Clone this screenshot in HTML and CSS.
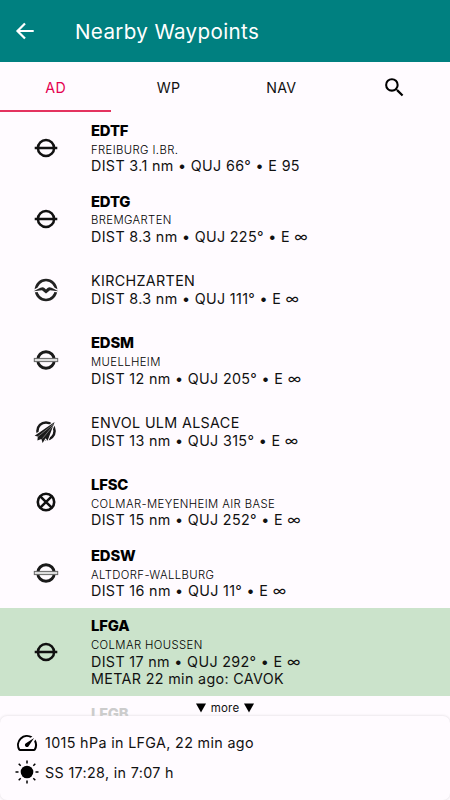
FILE: index.html
```
<!DOCTYPE html>
<html lang="en">
<head>
	<meta charset="utf-8">
	<meta name="viewport" content="width=device-width, initial-scale=1">
	<title>Nearby Waypoints</title>
	<link rel="stylesheet" href="styles.css">
</head>
<body>
	<svg class="defs" width="0" height="0">
		<symbol id="airport" viewBox="0 0 26 26">
			<circle cx="13" cy="13" r="8.1" fill="none" stroke="#111" stroke-width="2.5"/>
			<path d="M1.700 13h22.600" stroke="#111" stroke-width="2.5"/>
		</symbol>
		<symbol id="airfield" viewBox="0 0 26 26">
			<circle cx="13" cy="13" r="8.300" fill="none" stroke="#1a1a1a" stroke-width="2.9"/>
			<rect x="1.3" y="11.4" width="23.4" height="3.2" fill="#ddd" stroke="#666" stroke-width="1"/>
		</symbol>
		<symbol id="glider" viewBox="0 0 26 26">
			<circle cx="13" cy="13" r="10" fill="none" stroke="#222" stroke-width="2.7"/>
			<path d="M.5 14.200C4 12.800 7 10.400 9.500 10.200c1.500 0 2.500 1 3.500 2.300 1-1.300 2-2.300 3.500-2.300 2.500.2 5.500 2.600 9 4L17 13.300l-4 3.200-4-3.200z" fill="#222" stroke="#fffbff" stroke-width="2.6" paint-order="stroke"/>
		</symbol>
		<symbol id="ultralight" viewBox="0 0 26 26">
			<circle cx="13" cy="13" r="8.600" fill="none" stroke="#1a1a1a" stroke-width="2.500"/>
			<path d="M21.600 4L1.600 17.700l3.200.8-.4 4.100 4-1.600 1.200 4 3-4.700 2 2.500z" fill="#1a1a1a" stroke="#fffbff" stroke-width="2" paint-order="stroke"/>
			<path d="M20.500 6L5 18.500M20.600 7L9.500 20.500" stroke="#aaa" stroke-width=".6"/>
		</symbol>
		<symbol id="closed" viewBox="0 0 26 26">
			<circle cx="13" cy="13" r="8.200" fill="none" stroke="#111" stroke-width="2.600"/>
			<path d="M7.300 7.300l11.400 11.400M18.700 7.300L7.300 18.700" stroke="#111" stroke-width="2.500"/>
		</symbol>
	</svg>

	<div class="page">
		<header class="topbar">
			<svg class="back" viewBox="0 0 24 24"><path d="M21.500 12H4M12 3.800L3.800 12l8.200 8.200" fill="none" stroke="#fff" stroke-width="2.400"/></svg>
			<h1>Nearby Waypoints</h1>
		</header>
		<nav class="tabs">
			<div class="tab active">AD</div>
			<div class="tab">WP</div>
			<div class="tab">NAV</div>
			<div class="tab">
				<svg class="search" viewBox="0 0 24 24"><path d="M15.500 14h-.79l-.28-.27A6.471 6.471 0 0 0 16 9.500 6.500 6.500 0 1 0 9.500 16c1.610 0 3.090-.59 4.230-1.570l.27.28v.79l5 4.990L20.490 19l-4.990-5zm-6 0C7.010 14 5 11.990 5 9.500S7.010 5 9.500 5 14 7.010 14 9.500 11.990 14 9.500 14z"/></svg>
			</div>
		</nav>

		<main class="list">
			<div class="row">
				<svg class="icon"><use href="#airport"/></svg>
				<div class="info"><b>EDTF</b><small>FREIBURG I.BR.</small><p>DIST 3.1 nm • QUJ 66° • E 95</p></div>
			</div>
			<div class="row">
				<svg class="icon"><use href="#airport"/></svg>
				<div class="info"><b>EDTG</b><small>BREMGARTEN</small><p>DIST 8.3 nm • QUJ 225° • E ∞</p></div>
			</div>
			<div class="row">
				<svg class="icon"><use href="#glider"/></svg>
				<div class="info"><p>KIRCHZARTEN</p><p>DIST 8.3 nm • QUJ 111° • E ∞</p></div>
			</div>
			<div class="row">
				<svg class="icon"><use href="#airfield"/></svg>
				<div class="info"><b>EDSM</b><small>MUELLHEIM</small><p>DIST 12 nm • QUJ 205° • E ∞</p></div>
			</div>
			<div class="row">
				<svg class="icon"><use href="#ultralight"/></svg>
				<div class="info"><p>ENVOL ULM ALSACE</p><p>DIST 13 nm • QUJ 315° • E ∞</p></div>
			</div>
			<div class="row">
				<svg class="icon"><use href="#closed"/></svg>
				<div class="info"><b>LFSC</b><small>COLMAR-MEYENHEIM AIR BASE</small><p>DIST 15 nm • QUJ 252° • E ∞</p></div>
			</div>
			<div class="row">
				<svg class="icon"><use href="#airfield"/></svg>
				<div class="info"><b>EDSW</b><small>ALTDORF-WALLBURG</small><p>DIST 16 nm • QUJ 11° • E ∞</p></div>
			</div>
			<div class="row metar">
				<svg class="icon"><use href="#airport"/></svg>
				<div class="info"><b>LFGA</b><small>COLMAR HOUSSEN</small><p>DIST 17 nm • QUJ 292° • E ∞</p><p>METAR 22 min ago: CAVOK</p></div>
			</div>
			<div class="row next">
				<div class="info"><b>LFGB</b></div>
			</div>
			<div class="more">
				<svg viewBox="0 0 10 10"><path d="M0 .5h10L5 9.500z"/></svg>
				<span>more</span>
				<svg viewBox="0 0 10 10"><path d="M0 .5h10L5 9.500z"/></svg>
			</div>
		</main>

		<footer class="status">
			<div class="line">
				<svg viewBox="0 0 24 24"><path d="M20.380 8.570l-1.230 1.850a8 8 0 0 1-.22 7.580H5.070A8 8 0 0 1 15.580 6.850l1.850-1.230A10 10 0 0 0 3.350 19a2 2 0 0 0 1.720 1h13.850a2 2 0 0 0 1.740-1 10 10 0 0 0-.27-10.440zm-9.790 6.840a2 2 0 0 0 2.830 0l5.660-8.490-8.490 5.660a2 2 0 0 0 0 2.830z"/></svg>
				<span>1015 hPa in LFGA, 22 min ago</span>
			</div>
			<div class="line">
				<svg viewBox="0 0 24 24"><circle cx="12" cy="12" r="6.300"/><path d="M12 .5v3M12 20.500v3M.5 12h3M20.500 12h3M3.700 3.700l2 2M18.300 18.300l2 2M3.700 20.300l2-2M18.300 5.700l2-2" stroke="#000" stroke-width="1.500"/></svg>
				<span>SS 17:28, in 7:07 h</span>
			</div>
		</footer>
	</div>
</body>
</html>
```
FILE: styles.css
```
*{
	box-sizing: border-box;
}
body{
	margin: 0;
	background: #ddd;
	color: #111;
	font-family: Inter, "Liberation Sans", sans-serif;
	font-size: 14.3px;
	font-weight: 400;
	letter-spacing: 0.35px;
}
.defs{
	display: block;
}
.page{
	display: flex;
	flex-direction: column;
	height: 800px;
	overflow: hidden;
	background: #fffbff;
}
.topbar{
	display: flex;
	align-items: center;
	flex: none;
	height: 62.4px;
	padding-left: 14px;
	background: #008080;
	color: #fff;
}
.back{
	width: 22px;
	height: 22px;
}
.topbar h1{
	margin: 0 0 0 39px;
	font-size: 20.6px;
	font-weight: 400;
	letter-spacing: 0.35px;
}
.tabs{
	display: flex;
	flex: none;
	height: 50px;
	font-size: 14.2px;
}
.tab{
	display: flex;
	align-items: center;
	justify-content: center;
	width: 112.7px;
	padding: 2px 0 0 2px;
	border-bottom: 2px solid transparent;
}
.tab.active{
	width: 111.3px;
	padding-left: 0;
	color: #e4004f;
	border-bottom-color: #e4325f;
}
.search{
	width: 25px;
	height: 25px;
}
.list{
	position: relative;
	flex: 1;
	overflow: hidden;
}
.row{
	display: flex;
	align-items: center;
	height: 70.86px;
	padding-left: 33px;
}
.icon{
	flex: none;
	width: 26px;
	height: 26px;
}
.info{
	margin-left: 32px;
	padding-top: 0.8px;
	line-height: 17.7px;
}
.info b, .info small, .info p{
	display: block;
	height: 17.7px;
	margin: 0;
	white-space: nowrap;
}
.info b{
	padding-top: 1px;
	font-size: 14.8px;
	font-weight: 800;
	letter-spacing: -0.15px;
	color: #000;
}
.info small{
	padding-top: 2.2px;
	font-size: 11.3px;
	font-weight: 300;
	letter-spacing: 0.4px;
	color: #000;
}
.row.metar{
	height: 87.6px;
	background: #cbe3cb;
}
.row.next{
	align-items: flex-start;
	padding-top: 8px;
	padding-left: 59px;
}
.row.next b{
	color: #ccc;
}
/* hint lies over the last, cut off row */
.more{
	position: absolute;
	left: 0;
	right: 0;
	bottom: 0;
	display: flex;
	align-items: center;
	justify-content: center;
	gap: 4.5px;
	height: 15px;
	font-size: 11.5px;
	letter-spacing: 0.2px;
}
.more svg{
	width: 10px;
	height: 10px;
}
.status{
	flex: none;
	height: 84.5px;
	padding: 12.6px 15px;
	border-radius: 7px;
	background: #fffbff;
	box-shadow: 0 0 3px rgba(0,0,0,0.15);
}
.line{
	display: flex;
	align-items: center;
	gap: 6px;
	height: 29.6px;
}
.line svg{
	width: 24px;
	height: 24px;
}
```
